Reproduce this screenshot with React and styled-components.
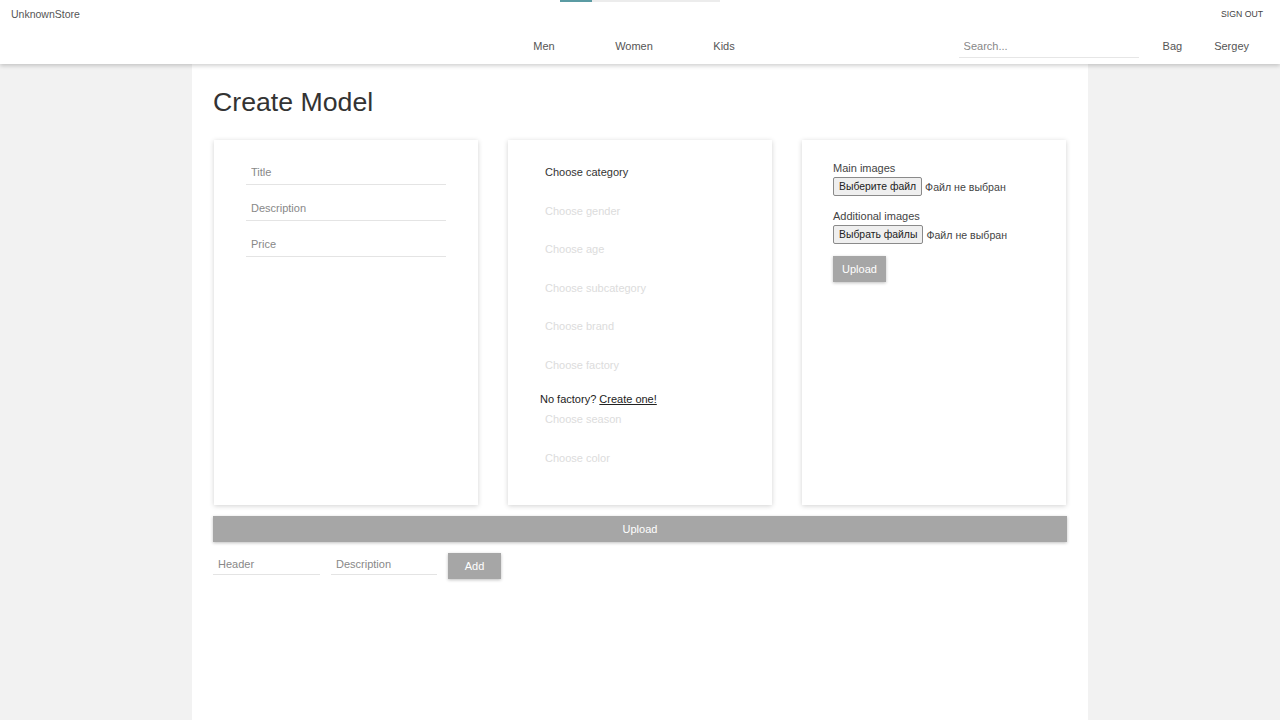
import React from "react";
import styled, { createGlobalStyle } from "styled-components";

const GlobalStyle = createGlobalStyle`
  html, body {
    margin: 0;
    padding: 0;
    background: #f2f2f2;
    font-family: "Liberation Sans", Arial, sans-serif;
  }
  * {
    box-sizing: border-box;
  }
`;

export default function App() {
  const selects = [
    { label: "Choose category", active: true },
    { label: "Choose gender" },
    { label: "Choose age" },
    { label: "Choose subcategory" },
    { label: "Choose brand" },
    { label: "Choose factory" },
  ];
  const selectsAfter = [{ label: "Choose season" }, { label: "Choose color" }];

  return (
    <>
      <GlobalStyle />
      <Header>
        <Progress>
          <ProgressFill />
        </Progress>
        <TopRow>
          <Logo>UnknownStore</Logo>
          <SignOut>SIGN OUT</SignOut>
        </TopRow>
        <NavRow>
          <Nav>
            <NavItem>Men</NavItem>
            <NavItem>Women</NavItem>
            <NavItem>Kids</NavItem>
          </Nav>
          <Search placeholder="Search..." />
          <UserLink>Bag</UserLink>
          <UserLink>Sergey</UserLink>
        </NavRow>
      </Header>

      <Main>
        <Title>Create Model</Title>
        <Cards>
          <Card>
            <Field placeholder="Title" />
            <Field placeholder="Description" />
            <Field placeholder="Price" />
          </Card>

          <Card>
            {selects.map((s) => (
              <Select key={s.label} $active={s.active}>
                {s.label}
              </Select>
            ))}
            <NoFactory>
              No factory? <a href="#">Create one!</a>
            </NoFactory>
            {selectsAfter.map((s) => (
              <Select key={s.label}>{s.label}</Select>
            ))}
          </Card>

          <Card $pl={31}>
            <FileLabel>Main images</FileLabel>
            <FileRow>
              <FileButton>Выберите файл</FileButton>
              <FileText>Файл не выбран</FileText>
            </FileRow>
            <FileLabel $gap>Additional images</FileLabel>
            <FileRow>
              <FileButton>Выбрать файлы</FileButton>
              <FileText>Файл не выбран</FileText>
            </FileRow>
            <GreyButton $small>Upload</GreyButton>
          </Card>
        </Cards>

        <WideButton>Upload</WideButton>

        <BottomRow>
          <SmallField placeholder="Header" $w={107} />
          <SmallField placeholder="Description" $w={106} />
          <GreyButton>Add</GreyButton>
        </BottomRow>
      </Main>
    </>
  );
}

const Header = styled.header`
  position: relative;
  z-index: 2;
  height: 64px;
  background: #fff;
  box-shadow: 0 2px 4px rgba(0, 0, 0, 0.18);
  color: #555;
`;

const Progress = styled.div`
  position: absolute;
  top: 0;
  left: 560px;
  width: 160px;
  height: 2px;
  background: #ececec;
`;

const ProgressFill = styled.div`
  width: 32px;
  height: 100%;
  background: #5b9ba3;
`;

const TopRow = styled.div`
  height: 28px;
  display: flex;
  align-items: center;
  justify-content: space-between;
  padding: 0 17px 0 11px;
`;

const Logo = styled.span`
  font-size: 10.5px;
  color: #555;
`;

const SignOut = styled.span`
  font-size: 8.7px;
  color: #444;
`;

const NavRow = styled.div`
  height: 36px;
  display: flex;
  align-items: center;
  padding: 0 15px 0 499px;
`;

const Nav = styled.nav`
  display: flex;
`;

const NavItem = styled.span`
  width: 90px;
  text-align: center;
  font-size: 11px;
  color: #555;
`;

const Search = styled.input`
  margin-left: auto;
  width: 180px;
  height: 23px;
  margin-top: 1px;
  border: none;
  border-bottom: 1px solid #e6e6e6;
  padding: 0 5px;
  font-family: inherit;
  font-size: 11px;
  color: #555;
  outline: none;
  &::placeholder {
    color: #888;
  }
`;

const UserLink = styled.span`
  padding: 0 16px;
  font-size: 11px;
  color: #555;
  &:first-of-type {
    margin-left: 8px;
  }
`;

const Main = styled.main`
  width: 896px;
  min-height: 656px;
  margin: 0 auto;
  background: #fff;
  padding: 22px 21px 40px;
`;

const Title = styled.h1`
  margin: 0;
  font-size: 26.7px;
  line-height: 32px;
  font-weight: 400;
  color: #333;
`;

const Cards = styled.div`
  display: grid;
  grid-template-columns: repeat(3, 1fr);
  gap: 30px;
  padding: 0 1px;
  margin-top: 22px;
`;

const Card = styled.div`
  height: 365px;
  background: #fff;
  box-shadow: 0 1px 5px rgba(0, 0, 0, 0.18);
  padding: 20px ${(p) => p.$pl || 32}px;
  display: flex;
  flex-direction: column;
  align-items: flex-start;
`;

const Field = styled.input`
  width: 200px;
  height: 25px;
  margin-bottom: 11px;
  border: none;
  border-bottom: 1px solid #e4e4e4;
  padding: 0 5px;
  font-family: inherit;
  font-size: 11px;
  outline: none;
  &::placeholder {
    color: #888;
  }
`;

const Select = styled.div`
  height: 38.5px;
  width: 100%;
  padding: 6px 0 0 5px;
  font-size: 11px;
  line-height: 14px;
  color: ${(p) => (p.$active ? "#333" : "#dcdcdc")};
  &:first-child {
    margin-top: -1px;
  }
`;

const NoFactory = styled.p`
  margin: 0;
  height: 16px;
  margin-top: 1px;
  margin-bottom: -1px;
  font-size: 11px;
  line-height: 16px;
  color: #222;
  & a {
    color: #222;
  }
`;

const FileLabel = styled.div`
  font-size: 11px;
  line-height: 14px;
  color: #444;
  margin-top: ${(p) => (p.$gap ? "13px" : "1px")};
`;

const FileRow = styled.div`
  display: flex;
  align-items: center;
  margin-top: 2px;
`;

const FileButton = styled.span`
  height: 19px;
  padding: 0 5px;
  display: inline-flex;
  align-items: center;
  background: #efefef;
  border: 1px solid #8a8a8a;
  border-radius: 2px;
  font-size: 10.4px;
  color: #222;
`;

const FileText = styled.span`
  margin-left: 3px;
  font-size: 10.6px;
  color: #444;
`;

const GreyButton = styled.button`
  width: 53px;
  height: 26px;
  margin-top: ${(p) => (p.$small ? "12px" : "0")};
  border: none;
  background: #a6a6a6;
  color: #fff;
  font-family: inherit;
  font-size: 11px;
  box-shadow: 0 1px 3px rgba(0, 0, 0, 0.25);
  padding: 0;
`;

const WideButton = styled.button`
  display: block;
  width: 100%;
  height: 26px;
  margin-top: 11px;
  border: none;
  background: #a6a6a6;
  color: #fff;
  font-family: inherit;
  font-size: 11px;
  box-shadow: 0 1px 3px rgba(0, 0, 0, 0.25);
`;

const BottomRow = styled.div`
  display: flex;
  align-items: flex-start;
  gap: 11px;
  margin-top: 11px;
`;

const SmallField = styled.input`
  width: ${(p) => p.$w}px;
  height: 22px;
  border: none;
  border-bottom: 1px solid #e4e4e4;
  padding: 0 5px;
  font-family: inherit;
  font-size: 11px;
  outline: none;
  &::placeholder {
    color: #888;
  }
`;
